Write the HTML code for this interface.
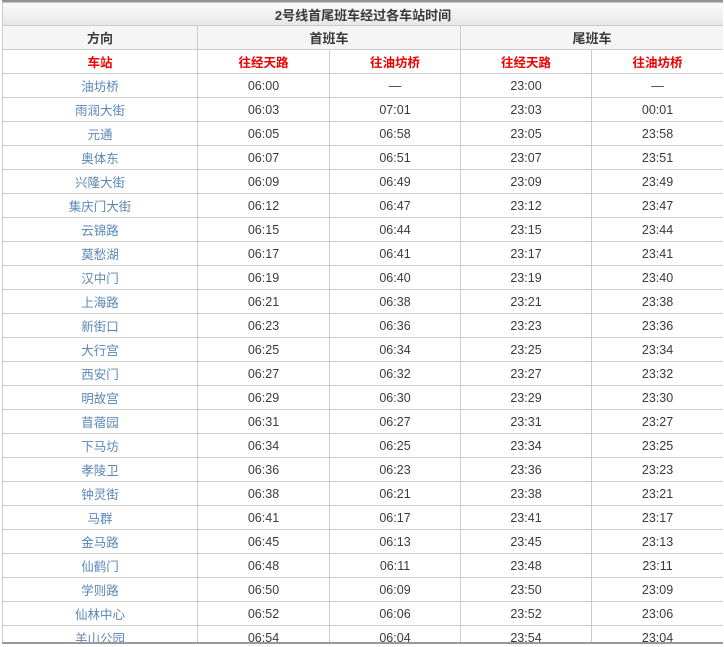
<!DOCTYPE html><html><head><meta charset="utf-8"><style>
body{margin:0;background:#fff;font-family:"Liberation Sans","Noto Sans CJK SC",sans-serif;}
.wrap{position:absolute;left:2px;top:0;width:721px;height:644px;overflow:hidden;border-top:2px solid #8a9494;border-bottom:2px solid #999;box-sizing:border-box;}
table{border-collapse:collapse;width:721px;table-layout:fixed;font-size:12.5px;color:#3a3a3a;}
td{border:1px solid #ccc;height:23px;text-align:center;padding:0;}
.t td{height:22px;background:linear-gradient(#fbfbfb,#e6e6e6);font-weight:bold;font-size:13px;}
.h td{background:#f5f5f5;font-weight:bold;font-size:13px;}
.r td{color:#e00;font-weight:bold;}
td.s{color:#5a87b8;}
</style></head><body><div class="wrap"><table>
<colgroup><col style="width:195px"><col style="width:132px"><col style="width:131px"><col style="width:131px"><col style="width:132px"></colgroup>
<tr class="t"><td colspan="5">2号线首尾班车经过各车站时间</td></tr>
<tr class="h"><td>方向</td><td colspan="2">首班车</td><td colspan="2">尾班车</td></tr>
<tr class="r"><td>车站</td><td>往经天路</td><td>往油坊桥</td><td>往经天路</td><td>往油坊桥</td></tr>
<tr><td class="s">油坊桥</td><td>06:00</td><td>—</td><td>23:00</td><td>—</td></tr>
<tr><td class="s">雨润大街</td><td>06:03</td><td>07:01</td><td>23:03</td><td>00:01</td></tr>
<tr><td class="s">元通</td><td>06:05</td><td>06:58</td><td>23:05</td><td>23:58</td></tr>
<tr><td class="s">奥体东</td><td>06:07</td><td>06:51</td><td>23:07</td><td>23:51</td></tr>
<tr><td class="s">兴隆大街</td><td>06:09</td><td>06:49</td><td>23:09</td><td>23:49</td></tr>
<tr><td class="s">集庆门大街</td><td>06:12</td><td>06:47</td><td>23:12</td><td>23:47</td></tr>
<tr><td class="s">云锦路</td><td>06:15</td><td>06:44</td><td>23:15</td><td>23:44</td></tr>
<tr><td class="s">莫愁湖</td><td>06:17</td><td>06:41</td><td>23:17</td><td>23:41</td></tr>
<tr><td class="s">汉中门</td><td>06:19</td><td>06:40</td><td>23:19</td><td>23:40</td></tr>
<tr><td class="s">上海路</td><td>06:21</td><td>06:38</td><td>23:21</td><td>23:38</td></tr>
<tr><td class="s">新街口</td><td>06:23</td><td>06:36</td><td>23:23</td><td>23:36</td></tr>
<tr><td class="s">大行宫</td><td>06:25</td><td>06:34</td><td>23:25</td><td>23:34</td></tr>
<tr><td class="s">西安门</td><td>06:27</td><td>06:32</td><td>23:27</td><td>23:32</td></tr>
<tr><td class="s">明故宫</td><td>06:29</td><td>06:30</td><td>23:29</td><td>23:30</td></tr>
<tr><td class="s">苜蓿园</td><td>06:31</td><td>06:27</td><td>23:31</td><td>23:27</td></tr>
<tr><td class="s">下马坊</td><td>06:34</td><td>06:25</td><td>23:34</td><td>23:25</td></tr>
<tr><td class="s">孝陵卫</td><td>06:36</td><td>06:23</td><td>23:36</td><td>23:23</td></tr>
<tr><td class="s">钟灵街</td><td>06:38</td><td>06:21</td><td>23:38</td><td>23:21</td></tr>
<tr><td class="s">马群</td><td>06:41</td><td>06:17</td><td>23:41</td><td>23:17</td></tr>
<tr><td class="s">金马路</td><td>06:45</td><td>06:13</td><td>23:45</td><td>23:13</td></tr>
<tr><td class="s">仙鹤门</td><td>06:48</td><td>06:11</td><td>23:48</td><td>23:11</td></tr>
<tr><td class="s">学则路</td><td>06:50</td><td>06:09</td><td>23:50</td><td>23:09</td></tr>
<tr><td class="s">仙林中心</td><td>06:52</td><td>06:06</td><td>23:52</td><td>23:06</td></tr>
<tr><td class="s">羊山公园</td><td>06:54</td><td>06:04</td><td>23:54</td><td>23:04</td></tr>
</table></div></body></html>
